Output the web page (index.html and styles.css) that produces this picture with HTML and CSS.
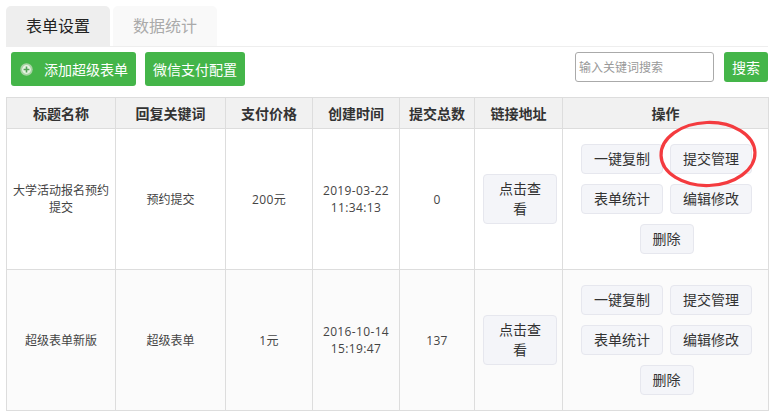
FILE: index.html
```html
<!DOCTYPE html>
<html lang="zh-CN">
<head>
<meta charset="utf-8">
<title>表单设置</title>
<link rel="stylesheet" href="styles.css">
</head>
<body>
<div class="page">
  <nav class="tabs">
    <a class="tab tab-active">表单设置</a>
    <a class="tab">数据统计</a>
  </nav>
  <div class="toolbar">
    <div class="toolbar-left">
      <a class="btn-green btn-add">
        <svg class="add-icon" width="13" height="13" viewBox="0 0 13 13">
          <circle cx="6.5" cy="6.5" r="6.2" fill="#a9d3a5"/>
          <circle cx="6.5" cy="6.5" r="4.4" fill="#e6f2e2"/>
          <path d="M6.5 3.6v5.8M3.6 6.5h5.8" stroke="#53a257" stroke-width="1.6"/>
        </svg>
        添加超级表单
      </a>
      <a class="btn-green">微信支付配置</a>
    </div>
    <div class="search">
      <input class="search-input" type="text" placeholder="输入关键词搜索">
      <a class="btn-green btn-search">搜索</a>
    </div>
  </div>
  <table class="data">
    <colgroup>
      <col class="c1"><col class="c2"><col class="c3"><col class="c4"><col class="c5"><col class="c6"><col class="c7">
    </colgroup>
    <thead>
      <tr><th>标题名称</th><th>回复关键词</th><th>支付价格</th><th>创建时间</th><th>提交总数</th><th>链接地址</th><th>操作</th></tr>
    </thead>
    <tbody>
      <tr>
        <td>大学活动报名预约提交</td><td>预约提交</td><td class="num">200元</td><td class="num">2019-03-22<br>11:34:13</td><td class="num">0</td>
        <td><a class="btn-light btn-link">点击查看</a></td>
        <td><div class="actions"><a class="btn-light">一键复制</a><a class="btn-light">提交管理</a><a class="btn-light">表单统计</a><a class="btn-light">编辑修改</a><a class="btn-light">删除</a></div></td>
      </tr>
      <tr class="alt">
        <td>超级表单新版</td><td>超级表单</td><td class="num">1元</td><td class="num">2016-10-14<br>15:19:47</td><td class="num">137</td>
        <td><a class="btn-light btn-link">点击查看</a></td>
        <td><div class="actions"><a class="btn-light">一键复制</a><a class="btn-light">提交管理</a><a class="btn-light">表单统计</a><a class="btn-light">编辑修改</a><a class="btn-light">删除</a></div></td>
      </tr>
    </tbody>
  </table>
  <svg class="circle-mark" width="102" height="72" viewBox="0 0 102 72">
    <ellipse cx="51" cy="36" rx="47" ry="31.5" fill="none" stroke="#f43b3f" stroke-width="3.2" transform="rotate(-2 51 36)"/>
  </svg>
</div>
</body>
</html>
```
FILE: styles.css
```css
* { box-sizing: border-box; }
html, body { margin: 0; padding: 0; background: #fff; }
body {
  font-family: "Open Sans", "Noto Sans CJK SC", sans-serif;
  font-size: 12px;
  color: #444;
  overflow: hidden;
}
.page { position: relative; width: 775px; height: 415px; padding: 6px 7px 0 6px; }
.tabs { display: flex; gap: 3px; height: 41px; border-bottom: 1px solid #eee; }
.tab {
  width: 104px; height: 40px; line-height: 40px; text-align: center;
  font-size: 16px; color: #aaa; background: #f9f9f9; border-radius: 5px 5px 0 0;
}
.tab-active { color: #222; background: #eee; }
.toolbar { display: flex; justify-content: space-between; align-items: flex-start; padding: 5px 0 0 5px; height: 50px; }
.toolbar-left { display: flex; gap: 9px; }
.btn-green {
  display: flex; align-items: center; justify-content: center;
  height: 34px; padding: 0 8px; font-size: 14px; color: #fff;
  background: #44b549; border-radius: 3px;
}
.btn-add { padding-left: 9px; }
.add-icon { margin-right: 11px; }
.search { display: flex; gap: 10px; }
.search-input {
  width: 139px; height: 30px; padding: 0 3px; font: 12px "Open Sans", "Noto Sans CJK SC", sans-serif;
  border: 1px solid #aaa; border-radius: 3px; outline: none;
}
.search-input::placeholder { color: #999; opacity: 1; }
.btn-search { width: 44px; height: 30px; padding: 0; }
.data { width: 762px; table-layout: fixed; border-collapse: collapse; text-align: center; }
.c1 { width: 109px; } .c2 { width: 110px; } .c3 { width: 87px; } .c4 { width: 87px; }
.c5 { width: 75px; } .c6 { width: 88px; } .c7 { width: 206px; }
.data th, .data td { border: 1px solid #ddd; padding: 0 5px; vertical-align: middle; }
.data th { height: 31px; font-size: 14px; font-weight: 700; color: #333; background: #f1f1f1; }
.data td { height: 141px; line-height: 17px; }
.data .num { letter-spacing: 0.35px; }
.alt td { background: #fbfbfb; }
.btn-light {
  display: block; padding: 4px 12px; font-size: 14px; line-height: 20px; color: #333;
  background: #f4f5f9; border: 1px solid #e6e7ee; border-radius: 4px;
}
.data .btn-link { width: 74px; margin-left: 3px; }
.actions { display: flex; flex-wrap: wrap; justify-content: center; gap: 10px 7px; padding-left: 2px; }
.circle-mark { position: absolute; left: 657px; top: 118px; pointer-events: none; }
```
